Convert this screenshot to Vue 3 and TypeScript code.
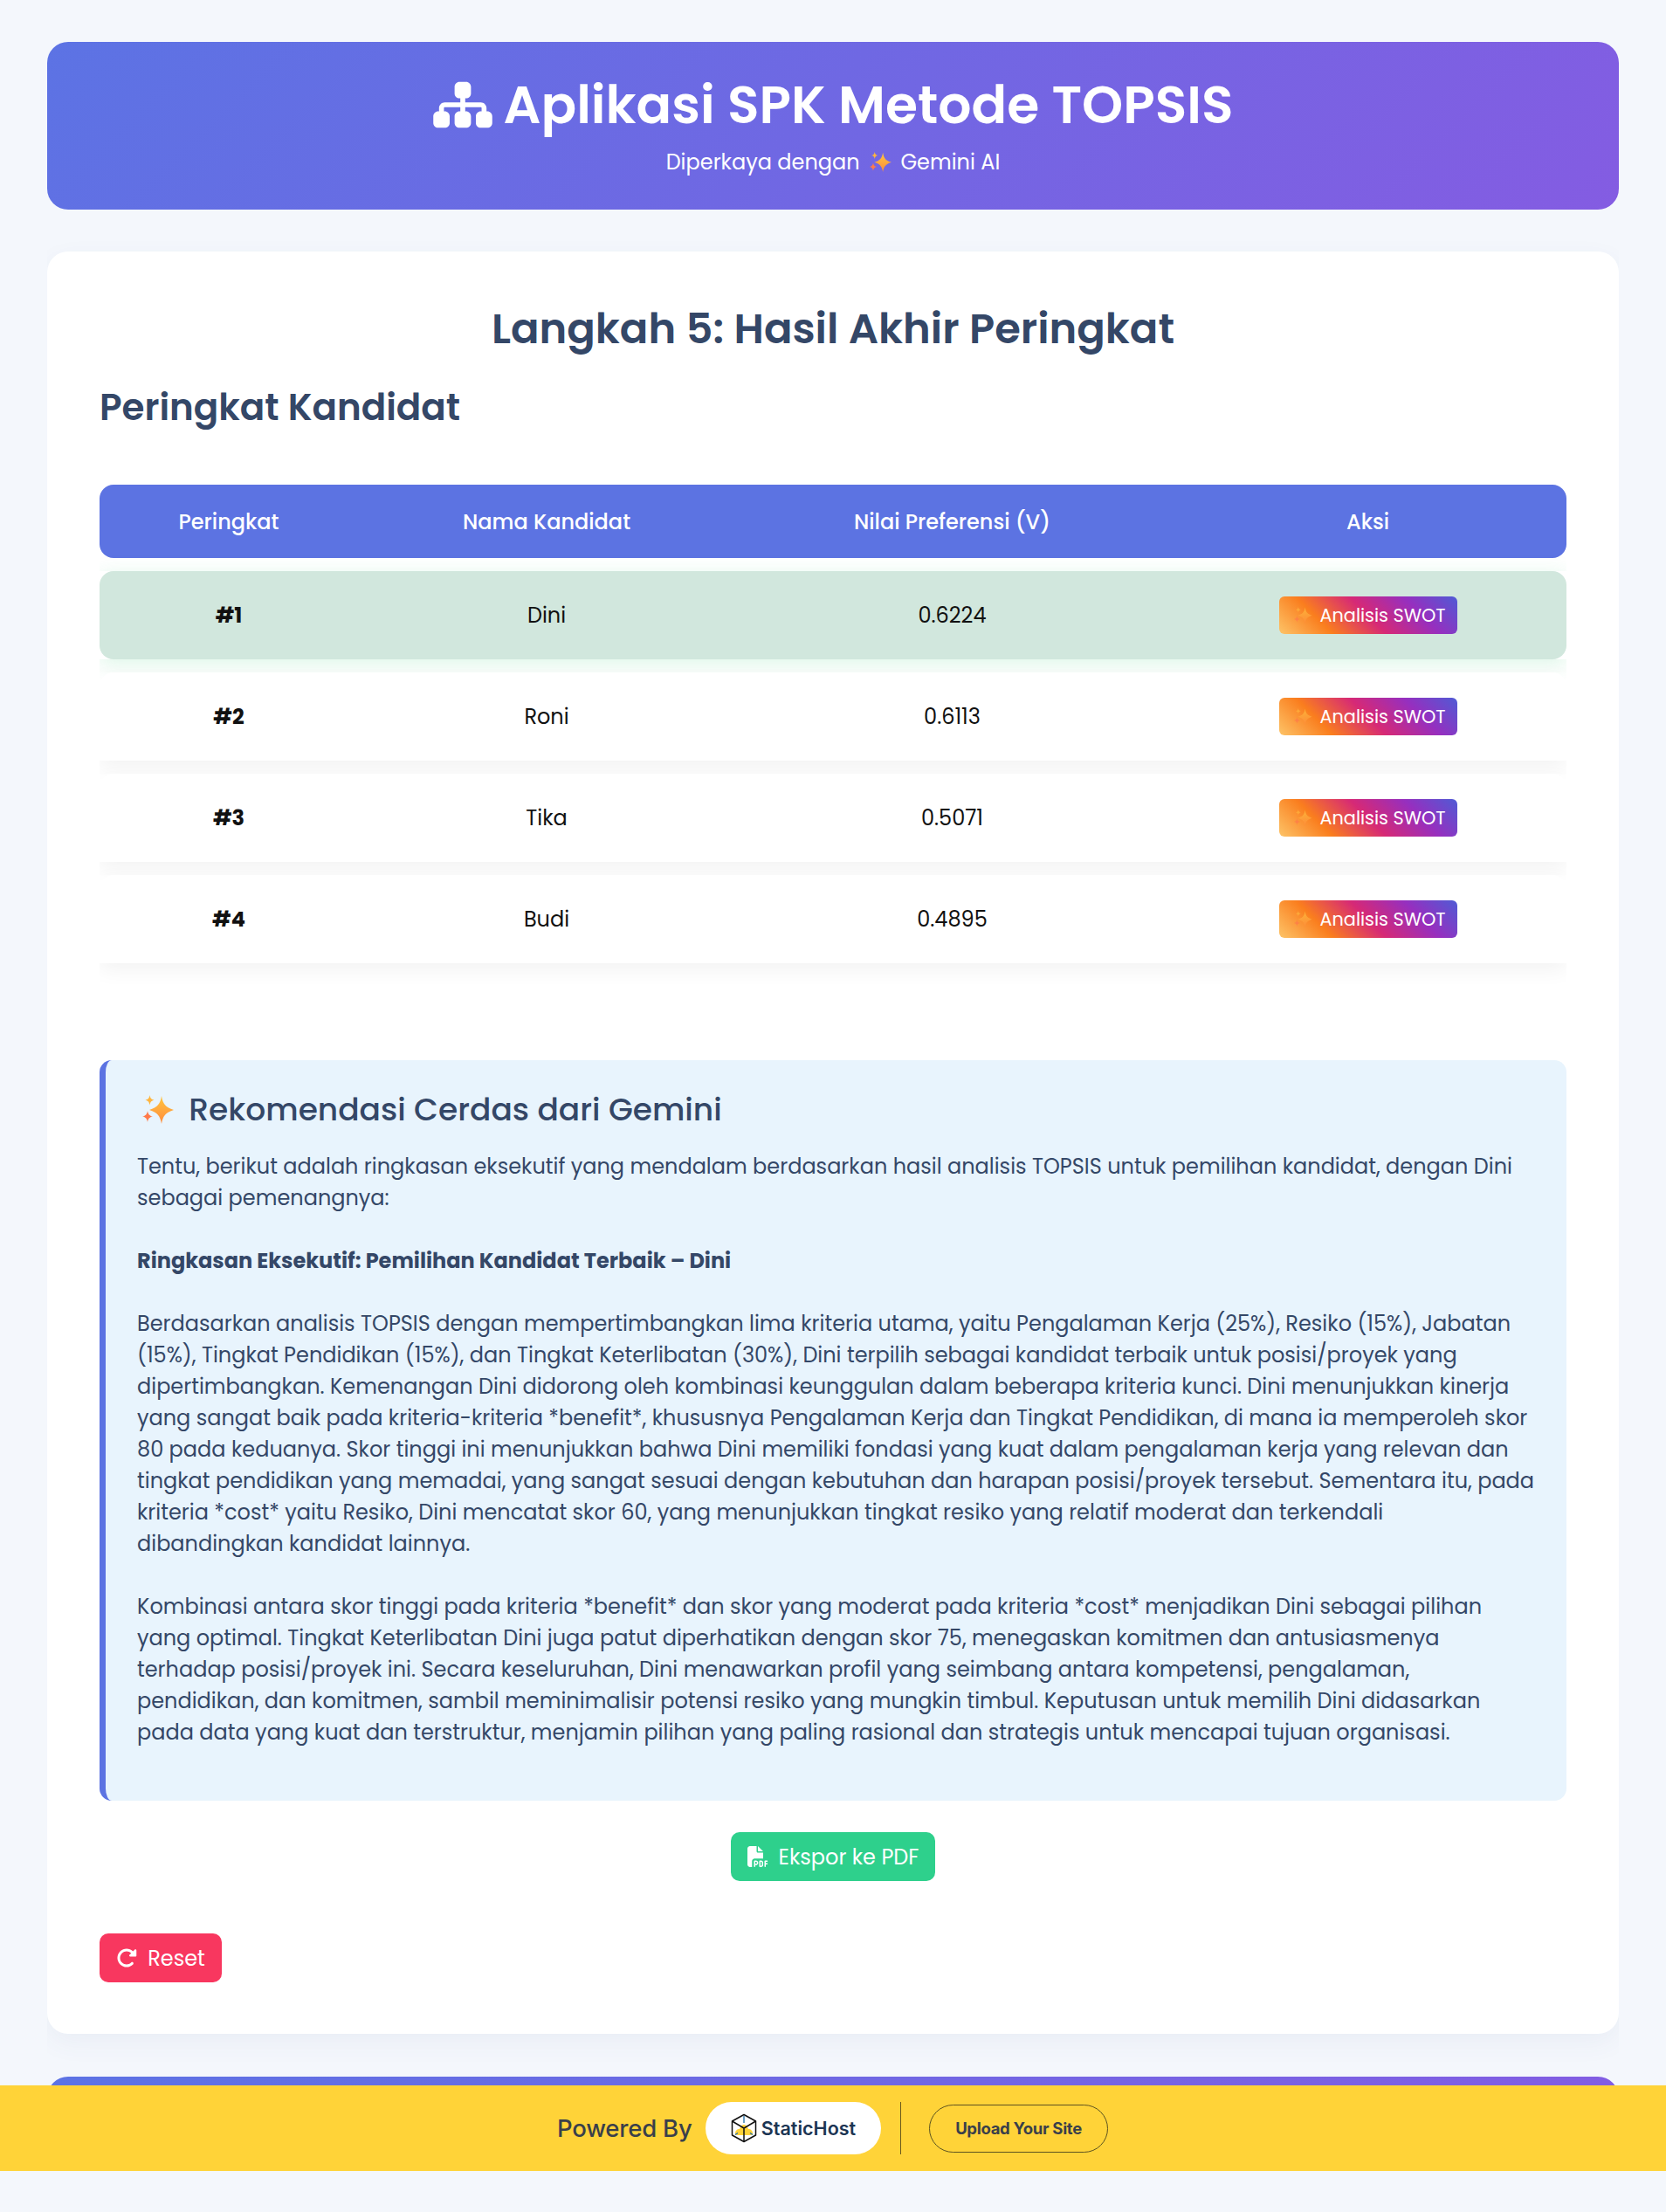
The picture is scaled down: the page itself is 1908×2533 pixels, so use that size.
<template>
  <div class="page">
    <header class="hero">
      <h1>
        <svg class="hero-icon" viewBox="0 0 576 512" fill="currentColor">
          <path d="M208 80c0-26.5 21.5-48 48-48h64c26.5 0 48 21.5 48 48v64c0 26.5-21.5 48-48 48h-8v40H464c30.9 0 56 25.1 56 56v32h8c26.5 0 48 21.5 48 48v64c0 26.5-21.5 48-48 48H464c-26.5 0-48-21.5-48-48V368c0-26.5 21.5-48 48-48h8V288c0-4.4-3.6-8-8-8H312v40h8c26.5 0 48 21.5 48 48v64c0 26.5-21.5 48-48 48H256c-26.5 0-48-21.5-48-48V368c0-26.5 21.5-48 48-48h8V280H112c-4.4 0-8 3.6-8 8v32h8c26.5 0 48 21.5 48 48v64c0 26.5-21.5 48-48 48H48c-26.5 0-48-21.5-48-48V368c0-26.5 21.5-48 48-48h8V288c0-30.9 25.1-56 56-56H264V192h-8c-26.5 0-48-21.5-48-48V80z" />
        </svg>
        Aplikasi SPK Metode TOPSIS
      </h1>
      <p class="hero-sub">
        Diperkaya dengan
        <svg class="spark spark-sub" viewBox="0 0 37 33"><use href="#sparkle" /></svg>
        Gemini AI
      </p>
    </header>

    <main class="card">
      <h2 class="step-title">Langkah 5: Hasil Akhir Peringkat</h2>
      <h3 class="rank-title">Peringkat Kandidat</h3>

      <div class="table-wrap">
        <table class="rank-table">
          <thead>
            <tr>
              <th class="col-rank">Peringkat</th>
              <th class="col-name">Nama Kandidat</th>
              <th class="col-score">Nilai Preferensi (V)</th>
              <th class="col-action">Aksi</th>
            </tr>
          </thead>
          <tbody>
            <tr v-for="(row, i) in ranking" :key="row.name" :class="{ winner: i === 0 }">
              <td class="rank-no">#{{ i + 1 }}</td>
              <td>{{ row.name }}</td>
              <td>{{ row.score }}</td>
              <td>
                <button class="btn-swot">
                  <svg class="spark spark-btn" viewBox="0 0 37 33"><use href="#sparkle" /></svg>
                  Analisis SWOT
                </button>
              </td>
            </tr>
          </tbody>
        </table>
      </div>

      <section class="advice">
        <h4>
          <svg class="spark spark-head" viewBox="0 0 37 33"><use href="#sparkle" /></svg>
          Rekomendasi Cerdas dari Gemini
        </h4>
        <div class="advice-text">
          <div v-for="(line, i) in adviceLines" :key="i" :class="{ strong: i === 3 }">{{ line || '&#160;' }}</div>
        </div>
      </section>

      <div class="export-row">
        <button class="btn btn-export">
          <svg class="btn-icon" viewBox="0 0 512 512" fill="currentColor">
            <path d="M0 64C0 28.7 28.7 0 64 0H224V128c0 17.7 14.3 32 32 32H384V304H176c-35.3 0-64 28.7-64 64V512H64c-35.3 0-64-28.7-64-64V64zm384 64H256V0L384 128zM176 352h32c30.9 0 56 25.1 56 56s-25.1 56-56 56H192v32c0 8.8-7.2 16-16 16s-16-7.2-16-16V448 368c0-8.8 7.2-16 16-16zm32 80c13.3 0 24-10.7 24-24s-10.7-24-24-24H192v48h16zm96-80h32c26.5 0 48 21.5 48 48v64c0 26.5-21.5 48-48 48H304c-8.8 0-16-7.2-16-16V368c0-8.8 7.2-16 16-16zm32 128c8.8 0 16-7.2 16-16V400c0-8.8-7.2-16-16-16H320v96h16zm80-112c0-8.8 7.2-16 16-16h48c8.8 0 16 7.2 16 16s-7.2 16-16 16H448v32h32c8.8 0 16 7.2 16 16s-7.2 16-16 16H448v48c0 8.8-7.2 16-16 16s-16-7.2-16-16V432 368z" />
          </svg>
          Ekspor ke PDF
        </button>
      </div>

      <button class="btn btn-reset">
        <svg class="btn-icon" viewBox="0 0 512 512" fill="currentColor">
          <path d="M463.5 224H472c13.3 0 24-10.7 24-24V72c0-9.7-5.8-18.5-14.8-22.2s-19.3-1.7-26.2 5.2L413.4 96.6c-87.6-86.5-228.7-86.2-315.8 1c-87.5 87.5-87.5 229.3 0 316.8s229.3 87.5 316.8 0c12.5-12.5 12.5-32.8 0-45.3s-32.8-12.5-45.3 0c-62.5 62.5-163.8 62.5-226.3 0s-62.5-163.8 0-226.3c62.2-62.2 162.7-62.5 225.3-1L327 183c-6.9 6.9-8.9 17.2-5.2 26.2s12.5 14.8 22.2 14.8H463.5z" />
        </svg>
        Reset
      </button>
    </main>

    <footer class="page-footer"></footer>

    <div class="promo">
      <span class="promo-label">Powered By</span>
      <div class="promo-logo">
        <svg class="cube" viewBox="0 0 30 34" fill="none">
          <path d="M5 23c0-3 2-5 5-5 1-3 3-5 5-5s4 2 5 5c3 0 5 2 5 5 0 1-1 2-2 2H7c-1 0-2-1-2-2z" fill="#ffd338" />
          <path d="M15 1.500 28.500 9v16L15 32.500 1.500 25V9z" stroke="#111" stroke-width="1.500" stroke-linejoin="round" />
          <path d="M1.500 9 15 17 28.500 9M15 17v15.500" stroke="#111" stroke-width="1.500" stroke-linejoin="round" />
          <path d="M15 3v8M5 24.500l3-2M25 24.500l-3-2" stroke="#1f6fa8" stroke-width="1.300" />
        </svg>
        <span>StaticHost</span>
      </div>
      <span class="promo-divider"></span>
      <span class="promo-upload">Upload Your Site</span>
    </div>

    <svg class="sprite" width="0" height="0">
      <defs>
        <linearGradient id="spark-main" x1="0" y1="0" x2="0" y2="1">
          <stop offset="0" stop-color="#ffc640" />
          <stop offset="1" stop-color="#ff8a3c" />
        </linearGradient>
        <symbol id="sparkle" viewBox="0 0 37 33">
          <path fill="url(#spark-main)" d="M23 1c1.500 9 4.500 13 14 16-9.500 3-12.500 7-14 16-1.500-9-4.500-13-14-16 9.500-3 12.500-7 14-16z" />
          <path fill="#ffb53f" d="M9.500 0c.6 3.500 1.700 4.900 5 5.700-3.300.8-4.400 2.200-5 5.700-.6-3.500-1.700-4.900-5-5.700 3.300-.8 4.400-2.200 5-5.700z" />
          <path fill="#ff7a4a" d="M7 18c.7 4 2 5.600 6 6.500-4 .9-5.300 2.500-6 6.500-.7-4-2-5.600-6-6.500 4-.9 5.300-2.500 6-6.500z" />
        </symbol>
      </defs>
    </svg>
  </div>
</template>

<script setup lang="ts">
interface RankRow {
  name: string
  score: string
}

const ranking: RankRow[] = [
  { name: 'Dini', score: '0.6224' },
  { name: 'Roni', score: '0.6113' },
  { name: 'Tika', score: '0.5071' },
  { name: 'Budi', score: '0.4895' },
]

const adviceLines: string[] = [
  'Tentu, berikut adalah ringkasan eksekutif yang mendalam berdasarkan hasil analisis TOPSIS untuk pemilihan kandidat, dengan Dini',
  'sebagai pemenangnya:',
  '',
  'Ringkasan Eksekutif: Pemilihan Kandidat Terbaik – Dini',
  '',
  'Berdasarkan analisis TOPSIS dengan mempertimbangkan lima kriteria utama, yaitu Pengalaman Kerja (25%), Resiko (15%), Jabatan',
  '(15%), Tingkat Pendidikan (15%), dan Tingkat Keterlibatan (30%), Dini terpilih sebagai kandidat terbaik untuk posisi/proyek yang',
  'dipertimbangkan. Kemenangan Dini didorong oleh kombinasi keunggulan dalam beberapa kriteria kunci. Dini menunjukkan kinerja',
  'yang sangat baik pada kriteria-kriteria *benefit*, khususnya Pengalaman Kerja dan Tingkat Pendidikan, di mana ia memperoleh skor',
  '80 pada keduanya. Skor tinggi ini menunjukkan bahwa Dini memiliki fondasi yang kuat dalam pengalaman kerja yang relevan dan',
  'tingkat pendidikan yang memadai, yang sangat sesuai dengan kebutuhan dan harapan posisi/proyek tersebut. Sementara itu, pada',
  'kriteria *cost* yaitu Resiko, Dini mencatat skor 60, yang menunjukkan tingkat resiko yang relatif moderat dan terkendali',
  'dibandingkan kandidat lainnya.',
  '',
  'Kombinasi antara skor tinggi pada kriteria *benefit* dan skor yang moderat pada kriteria *cost* menjadikan Dini sebagai pilihan',
  'yang optimal. Tingkat Keterlibatan Dini juga patut diperhatikan dengan skor 75, menegaskan komitmen dan antusiasmenya',
  'terhadap posisi/proyek ini. Secara keseluruhan, Dini menawarkan profil yang seimbang antara kompetensi, pengalaman,',
  'pendidikan, dan komitmen, sambil meminimalisir potensi resiko yang mungkin timbul. Keputusan untuk memilih Dini didasarkan',
  'pada data yang kuat dan terstruktur, menjamin pilihan yang paling rasional dan strategis untuk mencapai tujuan organisasi.',
]
</script>

<style>
body {
  margin: 0;
  background: #f4f7fc;
}
</style>

<style scoped>
.page {
  width: 1800px;
  height: 2533px;
  margin: 0 auto;
  padding-top: 48px;
  box-sizing: border-box;
  overflow: hidden;
  font-family: Poppins, Inter, "Noto Sans", sans-serif;
  color: #344767;
}

.hero {
  height: 192px;
  box-sizing: border-box;
  padding-top: 36px;
  border-radius: 24px;
  background: linear-gradient(135deg, #5c73e4 0%, #845ce2 100%);
  color: #fff;
  text-align: center;
}

.hero h1 {
  margin: 0;
  display: flex;
  align-items: center;
  justify-content: center;
  gap: 13px;
  font-size: 60px;
  line-height: 72px;
  font-weight: 600;
}

.hero-icon {
  width: 68px;
  height: 60px;
}

.hero-sub {
  margin: 12px 0 0;
  font-size: 24px;
  line-height: 36px;
}

.spark {
  display: inline-block;
  vertical-align: middle;
}

.spark-sub {
  width: 26px;
  height: 23px;
  margin: -3px 4px 0;
}

.card {
  margin-top: 48px;
  height: 2041px;
  box-sizing: border-box;
  padding: 57px 60px 0;
  border-radius: 24px;
  background: #fff;
  box-shadow: 0 10px 30px rgba(60, 80, 130, 0.06);
}

.step-title {
  margin: 0;
  text-align: center;
  font-size: 48px;
  line-height: 64px;
  font-weight: 600;
}

.rank-title {
  margin: 26px 0 0;
  font-size: 42px;
  line-height: 64px;
  font-weight: 600;
}

.table-wrap {
  margin-top: 41px;
  overflow-x: clip;
}

.rank-table {
  width: 1680px;
  border-collapse: separate;
  border-spacing: 0 15px;
  table-layout: fixed;
  font-size: 24px;
}

.col-rank {
  width: 296px;
}

.col-name {
  width: 432px;
}

.col-score {
  width: 497px;
}

.rank-table th {
  height: 84px;
  padding: 0;
  background: #5c73e2;
  color: #fff;
  font-size: 24px;
  font-weight: 500;
}

.rank-table th:first-child,
.rank-table td:first-child {
  border-radius: 16px 0 0 16px;
}

.rank-table th:last-child,
.rank-table td:last-child {
  border-radius: 0 16px 16px 0;
}

.rank-table tbody tr {
  box-shadow: 0 8px 22px rgba(0, 0, 0, 0.05);
}

.rank-table tbody tr.winner {
  box-shadow: 0 5px 22px rgba(46, 204, 113, 0.17);
}

.rank-table td {
  height: 101px;
  padding: 0;
  background: #fff;
  color: #111;
  text-align: center;
}

.rank-table .winner td {
  background: #d1e7dd;
}

.rank-no {
  font-weight: 700;
}

.btn-swot {
  width: 204px;
  height: 43px;
  display: inline-flex;
  align-items: center;
  gap: 9px;
  padding: 0 0 0 16px;
  border: none;
  border-radius: 6px;
  background: linear-gradient(45deg, #fdc468, #fa7e1e, #d62976, #962fbf, #4f5bd5);
  color: #fff;
  font-family: inherit;
  font-size: 20.8px;
  white-space: nowrap;
  vertical-align: middle;
}

.spark-btn {
  width: 22px;
  height: 19px;
  opacity: 0.7;
}

.advice {
  height: 848px;
  box-sizing: border-box;
  margin-top: 96px;
  padding: 32px 36px 0;
  border-left: 7px solid #5c73e2;
  border-radius: 14px;
  background: #e8f4fd;
}

.advice h4 {
  margin: 0;
  font-size: 36px;
  line-height: 50px;
  font-weight: 500;
}

.spark-head {
  width: 37px;
  height: 33px;
  margin: -6px 8px 0 5px;
}

.advice-text {
  margin-top: 22px;
  font-size: 24px;
  line-height: 36px;
  white-space: nowrap;
}

.advice-text .strong {
  font-weight: 700;
}

.export-row {
  margin-top: 36px;
  display: flex;
  justify-content: center;
}

.btn {
  height: 56px;
  display: inline-flex;
  align-items: center;
  justify-content: center;
  gap: 12px;
  padding: 0;
  border: none;
  border-radius: 10px;
  color: #fff;
  font-family: inherit;
  font-size: 24px;
}

.btn-icon {
  width: 24px;
  height: 24px;
}

.btn-export {
  width: 234px;
  background: #2ed08c;
}

.btn-reset {
  width: 140px;
  margin-top: 60px;
  background: #f8375f;
}

.page-footer {
  height: 100px;
  margin-top: 49px;
  border-radius: 24px;
  background: linear-gradient(135deg, #5c73e4 0%, #845ce2 100%);
}

.promo {
  position: fixed;
  left: 0;
  right: 0;
  bottom: 47px;
  height: 98px;
  display: flex;
  align-items: center;
  padding-left: 638px;
  box-sizing: border-box;
  background: #ffd338;
  font-family: Inter, "Noto Sans", sans-serif;
  color: #3a3f4a;
}

.promo-label {
  width: 170px;
  font-size: 27.5px;
  font-weight: 500;
  letter-spacing: -0.2px;
  white-space: nowrap;
}

.promo-logo {
  width: 201px;
  height: 60px;
  display: flex;
  align-items: center;
  justify-content: center;
  gap: 5px;
  border-radius: 30px;
  background: #fff;
  color: #1c3553;
  font-size: 21.5px;
  font-weight: 600;
}

.cube {
  width: 30px;
  height: 34px;
}

.promo-divider {
  width: 1px;
  height: 60px;
  margin: 0 32px 0 22px;
  background: #6b5a1e;
}

.promo-upload {
  width: 205px;
  height: 55px;
  box-sizing: border-box;
  display: flex;
  align-items: center;
  justify-content: center;
  border: 1.5px solid #5d5220;
  border-radius: 28px;
  font-size: 18.5px;
  font-weight: 700;
  letter-spacing: -0.3px;
  white-space: nowrap;
}

.sprite {
  position: absolute;
}
</style>
